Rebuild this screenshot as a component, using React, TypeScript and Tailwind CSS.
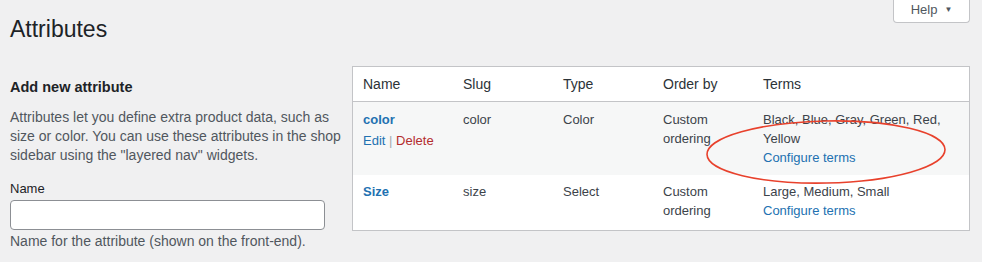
export default function App() {
  return (
    <div
      className="relative h-[262px] w-full overflow-hidden bg-[#f0f0f1] text-[13px] text-[#3c434a]"
      style={{ fontFamily: '"Liberation Sans", Arial, sans-serif' }}
    >
      <div className="flex items-start justify-between pl-[10px] pr-[12px]">
        <h1 className="mt-[15px] text-[23px] leading-[29px] text-[#1d2327]">Attributes</h1>
        <button className="flex h-[23px] w-[77px] items-center justify-center gap-[7px] rounded-b-[4px] border border-t-0 border-[#c3c4c7] bg-white pb-[3px] text-[13px] text-[#50575e]">
          <span>Help</span>
          <span className="text-[8px]">▼</span>
        </button>
      </div>

      <div className="mt-[22px] flex items-start">
        <div className="w-[346px] pl-[10px]">
          <h2 className="mt-[11px] text-[14.5px] font-bold leading-[20px] text-[#1d2327]">Add new attribute</h2>
          <p className="mt-[11px] text-[14px] leading-[19px] text-[#50575e]">
            Attributes let you define extra product data, such as size or color. You can use these attributes in the shop
            sidebar using the "layered nav" widgets.
          </p>
          <label className="mt-[14px] block leading-[19px] text-[#1d2327]">Name</label>
          <input
            type="text"
            className="mt-[1.5px] block h-[30px] w-[315px] rounded-[4px] border border-[#8c8f94] bg-white px-2"
          />
          <p className="mt-[2.5px] text-[14px] leading-[19px] text-[#50575e]">
            Name for the attribute (shown on the front-end).
          </p>
        </div>

        <div className="ml-[6px] w-[618px] border border-[#c3c4c7] bg-white">
          <div className="grid grid-cols-[100px_100px_100px_100px_1fr] border-b border-[#c3c4c7] text-[14px] leading-[19px] text-[#2c3338]">
            <div className="px-[10px] py-[7.5px]">Name</div>
            <div className="px-[10px] py-[7.5px]">Slug</div>
            <div className="px-[10px] py-[7.5px]">Type</div>
            <div className="px-[10px] py-[7.5px]">Order by</div>
            <div className="px-[10px] py-[7.5px]">Terms</div>
          </div>

          <div className="grid grid-cols-[100px_100px_100px_100px_1fr] bg-[#f6f7f7] leading-[19px]">
            <div className="px-[10px] pb-[8px] pt-[7.5px]">
              <a className="font-bold text-[#2271b1]">color</a>
              <div className="mt-[2px]">
                <a className="text-[#2271b1]">Edit</a> <span className="text-[#a7aaad]">|</span>{" "}
                <a className="text-[#b32d2e]">Delete</a>
              </div>
            </div>
            <div className="px-[10px] pt-[7.5px]">color</div>
            <div className="px-[10px] pt-[7.5px]">Color</div>
            <div className="px-[10px] pt-[7.5px]">Custom ordering</div>
            <div className="px-[10px] pb-[8px] pt-[7.5px]">
              <div>Black, Blue, Gray, Green, Red, Yellow</div>
              <a className="text-[#2271b1]">Configure terms</a>
            </div>
          </div>

          <div className="grid grid-cols-[100px_100px_100px_100px_1fr] leading-[19px]">
            <div className="px-[10px] pt-[7.5px]">
              <a className="font-bold text-[#2271b1]">Size</a>
            </div>
            <div className="px-[10px] pt-[7.5px]">size</div>
            <div className="px-[10px] pt-[7.5px]">Select</div>
            <div className="px-[10px] pt-[7.5px]">Custom ordering</div>
            <div className="px-[10px] pb-[10px] pt-[7.5px]">
              <div>Large, Medium, Small</div>
              <a className="text-[#2271b1]">Configure terms</a>
            </div>
          </div>
        </div>
      </div>

      <svg className="pointer-events-none absolute left-[700px] top-[114px]" width="260" height="76" viewBox="0 0 260 76">
        <ellipse
          cx="126"
          cy="38"
          rx="119"
          ry="31"
          fill="none"
          stroke="#e8412c"
          strokeWidth="1.6"
          transform="rotate(-1.2 126 38)"
        />
      </svg>
    </div>
  );
}
